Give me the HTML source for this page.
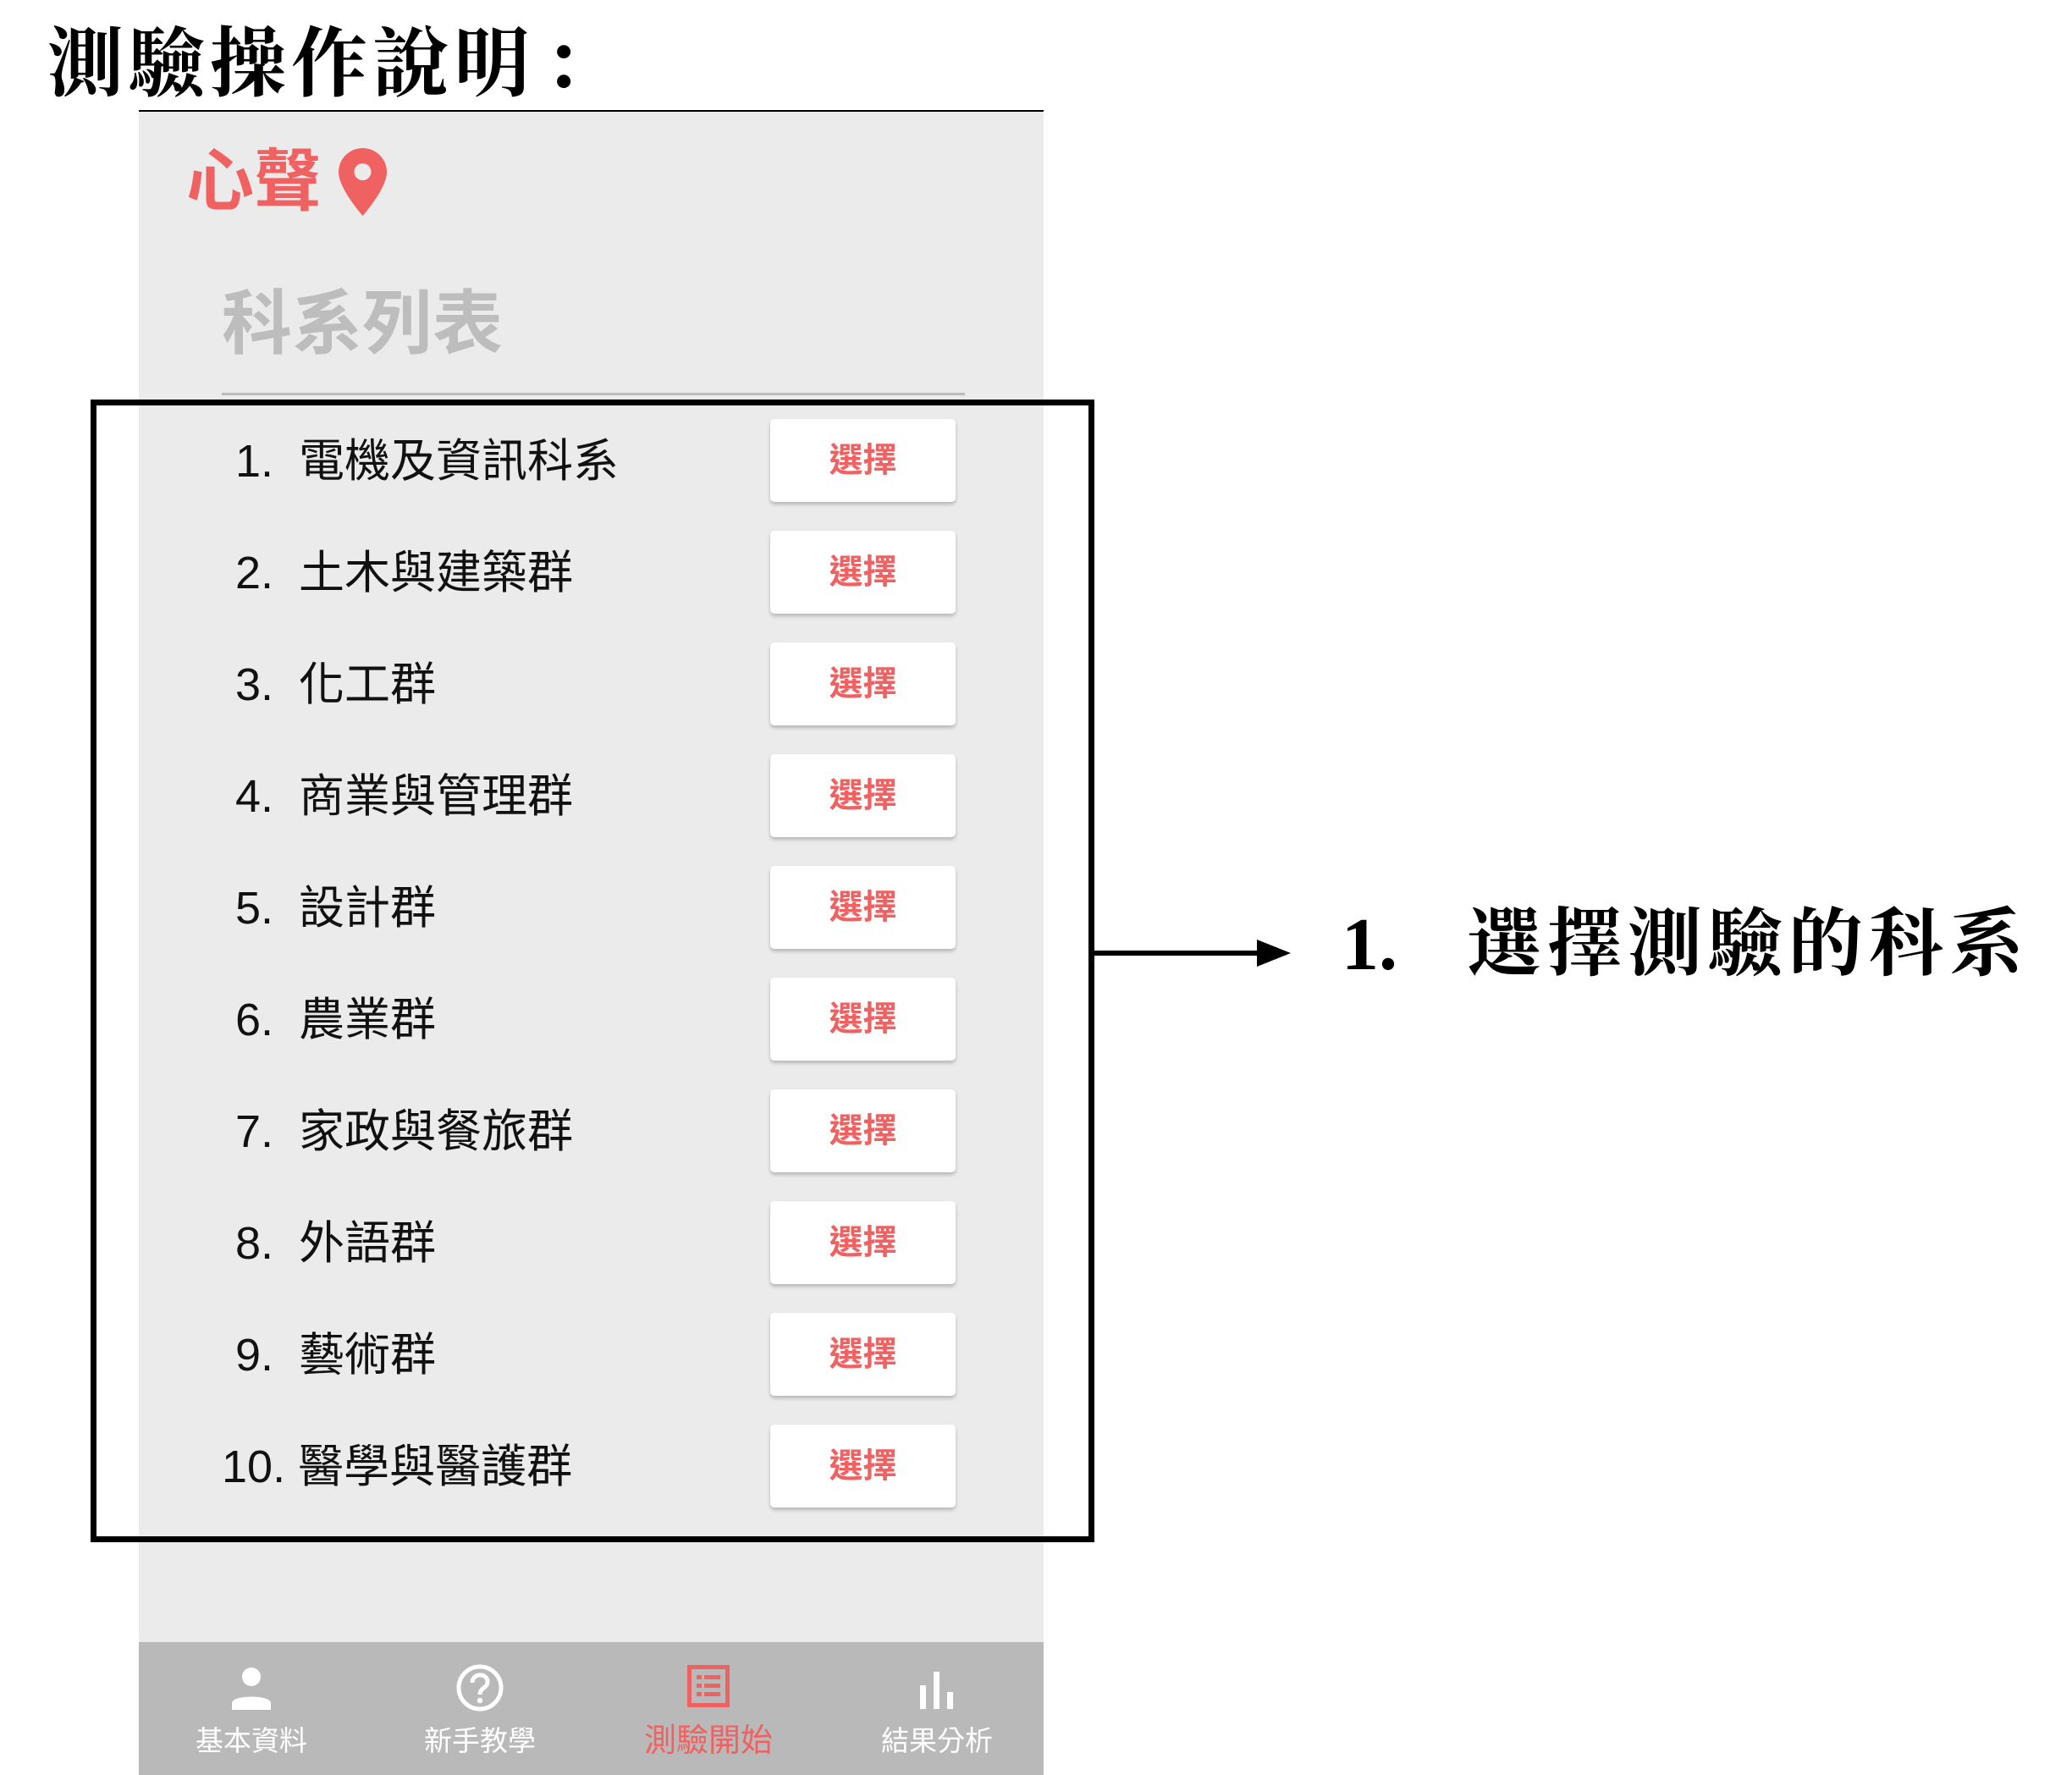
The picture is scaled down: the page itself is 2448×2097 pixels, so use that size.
<!DOCTYPE html>
<html><head><meta charset="utf-8"><style>
*{margin:0;padding:0;box-sizing:border-box}
body{width:2448px;height:2097px;background:#fff;position:relative;overflow:hidden;font-family:"Liberation Sans","Noto Sans CJK TC",sans-serif}
.a{position:absolute}
.title{left:56px;top:22px;font-size:90px;line-height:110px;font-weight:bold;font-family:"Liberation Serif","Noto Serif CJK SC",serif;color:#000;letter-spacing:6px}
.panel{left:164px;top:132px;width:1069px;height:1965px;background:#ebebeb}
.row{left:278px;font-size:54px;line-height:60px;color:#111}
.btn{left:910px;width:219px;height:98px;background:#fff;border-radius:5px;box-shadow:0 3px 4px rgba(0,0,0,.22);color:#f06262;font-size:40px;font-weight:bold;text-align:center;line-height:98px}
.nav{left:164px;top:1940px;width:1069px;height:157px;background:#b9b9b9}
.lab{font-size:33px;color:#fff;width:200px;text-align:center;top:2030px}
</style></head><body>
<div class="a title">測驗操作說明<span style="margin-left:10px">：</span></div>
<div class="a" style="left:164px;top:130px;width:1069px;height:2px;background:#000"></div>
<div class="a panel"></div>
<div class="a" style="left:220px;top:160px;font-size:80px;line-height:110px;font-weight:bold;color:#f06262">心聲</div>
<svg class="a" style="left:400px;top:175px" width="57" height="80" viewBox="0 0 57 80"><path d="M28.5 0C12.8 0 0 12.6 0 28.3 0 48 28.5 80 28.5 80S57 48 57 28.3C57 12.6 44.2 0 28.5 0z" fill="#f06262"/><circle cx="28.5" cy="28" r="10" fill="#ebebeb"/></svg>
<div class="a" style="left:262px;top:328px;font-size:83px;line-height:110px;font-weight:bold;color:#bdbdbd">科系列表</div>
<div class="a" style="left:262px;top:464px;width:878px;height:3px;background:#bcbcbc"></div>

<div class="a row" style="top:515px">1.&nbsp;&nbsp;電機及資訊科系</div>
<div class="a row" style="top:647px">2.&nbsp;&nbsp;土木與建築群</div>
<div class="a row" style="top:779px">3.&nbsp;&nbsp;化工群</div>
<div class="a row" style="top:911px">4.&nbsp;&nbsp;商業與管理群</div>
<div class="a row" style="top:1043px">5.&nbsp;&nbsp;設計群</div>
<div class="a row" style="top:1175px">6.&nbsp;&nbsp;農業群</div>
<div class="a row" style="top:1307px">7.&nbsp;&nbsp;家政與餐旅群</div>
<div class="a row" style="top:1439px">8.&nbsp;&nbsp;外語群</div>
<div class="a row" style="top:1571px">9.&nbsp;&nbsp;藝術群</div>
<div class="a row" style="top:1703px;left:262px">10. 醫學與醫護群</div>

<div class="a btn" style="top:495px">選擇</div>
<div class="a btn" style="top:627px">選擇</div>
<div class="a btn" style="top:759px">選擇</div>
<div class="a btn" style="top:891px">選擇</div>
<div class="a btn" style="top:1023px">選擇</div>
<div class="a btn" style="top:1155px">選擇</div>
<div class="a btn" style="top:1287px">選擇</div>
<div class="a btn" style="top:1419px">選擇</div>
<div class="a btn" style="top:1551px">選擇</div>
<div class="a btn" style="top:1683px">選擇</div>

<div class="a" style="left:107px;top:472px;width:1186px;height:1350px;border:7px solid #000"></div>

<div class="a nav"></div>
<svg class="a" style="left:272px;top:1968px" width="50" height="52" viewBox="0 0 50 52"><circle cx="25" cy="13" r="11" fill="#fff"/><path d="M2 52V44C2 34 48 34 48 44V52Z" fill="#fff"/></svg>
<svg class="a" style="left:539px;top:1966px" width="56" height="56" viewBox="0 0 56 56"><circle cx="28" cy="28" r="25" fill="none" stroke="#fff" stroke-width="5"/><path d="M19 22C19 10 37 10 37 21C37 28 28 28 28 36" fill="none" stroke="#fff" stroke-width="5"/><circle cx="28" cy="43" r="3.2" fill="#fff"/></svg>
<svg class="a" style="left:812px;top:1967px" width="50" height="50" viewBox="0 0 50 50"><rect x="2.5" y="2.5" width="45" height="45" fill="none" stroke="#f06262" stroke-width="5"/><rect x="11" y="12" width="6" height="5" fill="#f06262"/><rect x="20" y="12" width="19" height="5" fill="#f06262"/><rect x="11" y="22" width="6" height="5" fill="#f06262"/><rect x="20" y="22" width="19" height="5" fill="#f06262"/><rect x="11" y="32" width="6" height="5" fill="#f06262"/><rect x="20" y="32" width="19" height="5" fill="#f06262"/></svg>
<svg class="a" style="left:1087px;top:1975px" width="40" height="44" viewBox="0 0 40 44"><rect x="0" y="16" width="7" height="28" fill="#fff"/><rect x="16" y="0" width="7" height="44" fill="#fff"/><rect x="32" y="24" width="7" height="20" fill="#fff"/></svg>
<div class="a lab" style="left:197px">基本資料</div>
<div class="a lab" style="left:467px">新手教學</div>
<div class="a lab" style="left:737px;color:#f06262;font-size:38px;top:2025px">測驗開始</div>
<div class="a lab" style="left:1007px">結果分析</div>

<div class="a" style="left:1291px;top:1123px;width:200px;height:6px;background:#000"></div>
<svg class="a" style="left:1485px;top:1110px" width="40" height="32" viewBox="0 0 40 32"><path d="M0 0L40 16L0 32Z" fill="#000"/></svg>
<div class="a" style="left:1585px;top:1062px;font-size:88px;line-height:110px;font-family:'Liberation Serif','Noto Serif CJK SC',serif;font-weight:bold;color:#000;white-space:nowrap">1.<span style="position:absolute;left:148px;top:0;letter-spacing:7px">選擇測驗的科系</span></div>
</body></html>
